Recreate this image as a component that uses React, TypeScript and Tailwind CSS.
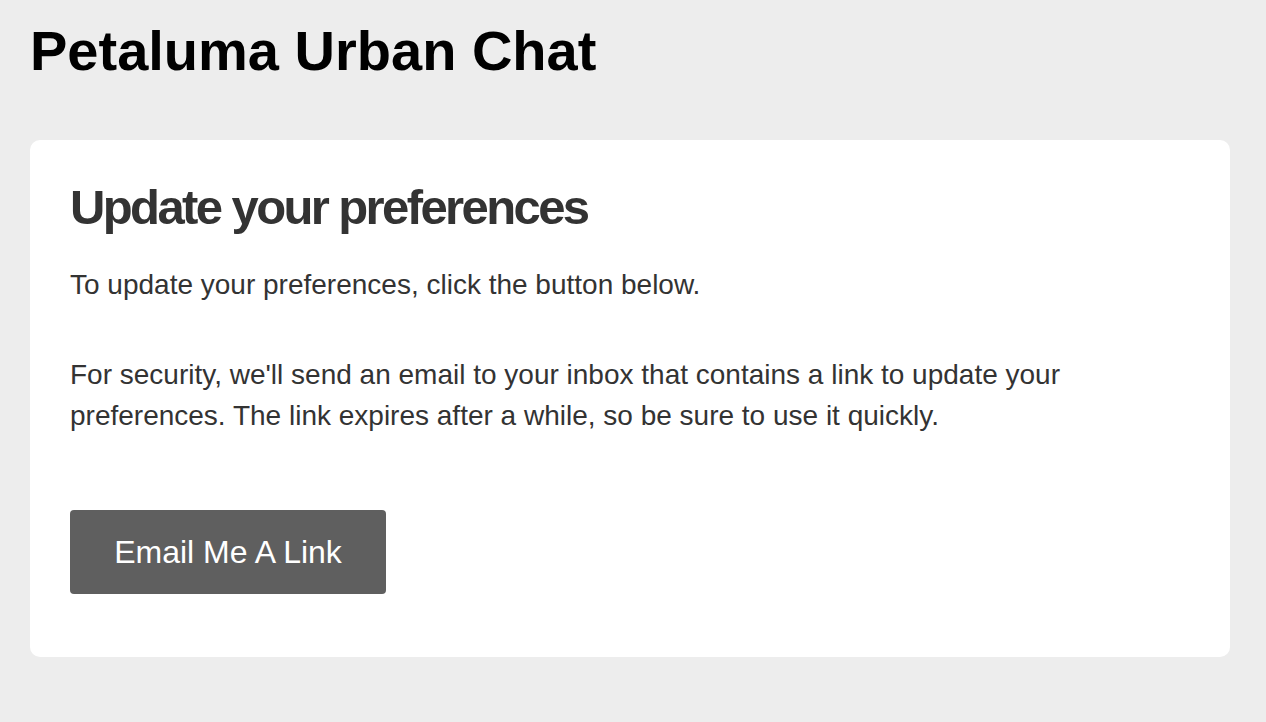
export default function App() {
  return (
    <main className="min-h-screen bg-[#ededed] px-[30px] pt-[23px] pb-16 font-['Liberation_Sans',Arial,sans-serif]">
      {/* SITE TITLE */}
      <h1 className="text-[56px] leading-none font-bold text-black">
        Petaluma Urban Chat
      </h1>

      {/* PREFERENCES CARD */}
      <section className="mt-[61px] max-w-[1200px] bg-white rounded-[10px] pt-[43px] pb-[63px] px-[40px]">
        <h2 className="text-[49px] leading-none font-bold tracking-[-2.6px] text-[#333]">
          Update your preferences
        </h2>

        <p className="mt-[32px] text-[28px] leading-[41px] text-[#333]">
          To update your preferences, click the button below.
        </p>

        <p className="mt-[49px] text-[28px] leading-[41px] text-[#333]">
          For security, we'll send an email to your inbox that contains a link
          to update your preferences. The link expires after a while, so be sure
          to use it quickly.
        </p>

        <button
          type="button"
          className="mt-[74px] flex items-center justify-center w-[316px] h-[84px] rounded bg-[#5f5f5f] text-white text-[32px] leading-none"
        >
          Email Me A Link
        </button>
      </section>
    </main>
  );
}
